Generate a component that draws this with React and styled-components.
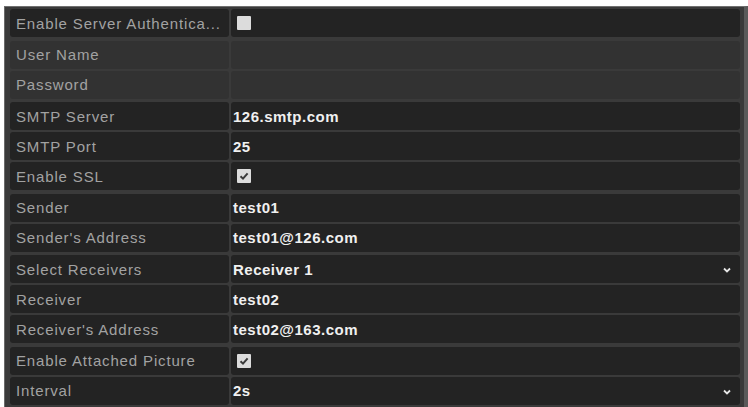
import styled, { createGlobalStyle } from "styled-components";

const GlobalStyle = createGlobalStyle`
  html, body {
    margin: 0;
    background: #ffffff;
    font-family: "Liberation Sans", Arial, sans-serif;
  }
`;

const groups = [
  [{ label: "Enable Server Authentica...", type: "check", checked: false }],
  [
    { label: "User Name", disabled: true },
    { label: "Password", disabled: true },
  ],
  [
    { label: "SMTP Server", value: "126.smtp.com" },
    { label: "SMTP Port", value: "25" },
    { label: "Enable SSL", type: "check", checked: true },
  ],
  [
    { label: "Sender", value: "test01" },
    { label: "Sender's Address", value: "test01@126.com" },
  ],
  [
    { label: "Select Receivers", value: "Receiver 1", type: "select" },
    { label: "Receiver", value: "test02" },
    { label: "Receiver's Address", value: "test02@163.com" },
  ],
  [
    { label: "Enable Attached Picture", type: "check", checked: true },
    { label: "Interval", value: "2s", type: "select" },
  ],
];

function Checkbox({ checked }) {
  return (
    <Box>
      {checked && (
        <svg width="10" height="10" viewBox="0 0 10 10">
          <polyline
            points="1.5,5.2 4,7.6 8.6,2.4"
            fill="none"
            stroke="#3a3a3a"
            strokeWidth="2"
          />
        </svg>
      )}
    </Box>
  );
}

function Chevron() {
  return (
    <Arrow width="8" height="6" viewBox="0 0 8 6">
      <polyline
        points="1,1.5 4,4.5 7,1.5"
        fill="none"
        stroke="#e6e6e6"
        strokeWidth="1.8"
      />
    </Arrow>
  );
}

function SettingRow({ item }) {
  return (
    <Row>
      <LabelCell $disabled={item.disabled}>
        <Label>{item.label}</Label>
      </LabelCell>
      <ValueCell $disabled={item.disabled}>
        {item.type === "check" ? (
          <Checkbox checked={item.checked} />
        ) : (
          <Value>{item.value}</Value>
        )}
        {item.type === "select" && <Chevron />}
      </ValueCell>
    </Row>
  );
}

export default function App() {
  return (
    <>
      <GlobalStyle />
      <Frame>
        <Panel>
          {groups.map((rows, i) => (
            <Group key={i}>
              {rows.map((item) => (
                <SettingRow key={item.label} item={item} />
              ))}
            </Group>
          ))}
        </Panel>
      </Frame>
    </>
  );
}

const Frame = styled.div`
  padding: 6px 0 0 4px;
`;

const Panel = styled.div`
  display: flex;
  flex-direction: column;
  gap: 3.5px;
  background: #3a3a3a;
  border-top: 1px solid #707070;
  border-left: 1px solid #6a6a6a;
  border-right: 4px solid #5a5a5a;
  padding: 2px 4px 3px 5px;
`;

const Group = styled.div`
  display: flex;
  flex-direction: column;
  gap: 2px;
`;

const Row = styled.div`
  display: grid;
  grid-template-columns: 219px 1fr;
  gap: 2px;
  height: 28px;
`;

const LabelCell = styled.div`
  display: flex;
  align-items: center;
  padding-left: 6px;
  border-radius: 3px;
  background: ${(p) => (p.$disabled ? "#323232" : "#232323")};
  min-width: 0;
`;

const ValueCell = styled(LabelCell)`
  position: relative;
  padding-left: 2px;
`;

const Label = styled.span`
  font-size: 15px;
  letter-spacing: 0.85px;
  color: #a2a2a2;
  white-space: nowrap;
  overflow: hidden;
`;

const Value = styled.span`
  font-size: 15px;
  font-weight: bold;
  letter-spacing: 0.5px;
  color: #f0f0f0;
  white-space: nowrap;
`;

const Box = styled.div`
  width: 14px;
  height: 14px;
  margin-left: 4px;
  background: #dcdcdc;
  border-radius: 1px;
  display: grid;
  place-items: center;
`;

const Arrow = styled.svg`
  position: absolute;
  right: 9px;
  top: 50%;
  margin-top: -2px;
`;
